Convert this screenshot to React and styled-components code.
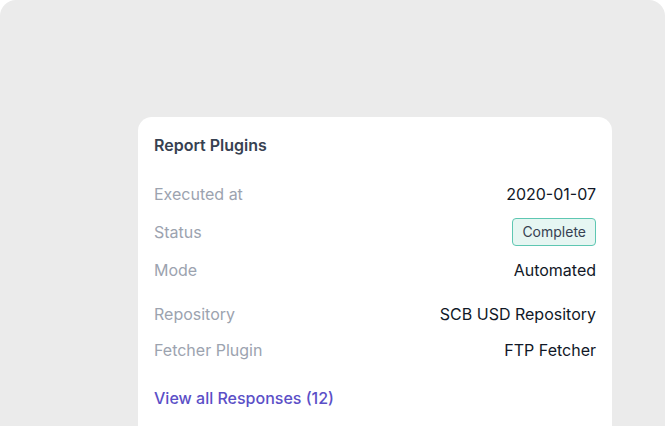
import React from 'react';
import styled, {createGlobalStyle} from 'styled-components';

const GlobalStyle = createGlobalStyle`
  html, body {
    margin: 0;
    padding: 0;
    background: #ffffff;
  }
  body {
    font-family: Inter, "Noto Sans", sans-serif;
  }
`;

const rows = [
  [
    {label: 'Executed at', value: '2020-01-07'},
    {label: 'Status', value: 'Complete', badge: true},
    {label: 'Mode', value: 'Automated'},
  ],
  [
    {label: 'Repository', value: 'SCB USD Repository'},
    {label: 'Fetcher Plugin', value: 'FTP Fetcher'},
  ],
];

function App() {
  return (
    <>
      <GlobalStyle />
      <ScPage>
        <ScCard>
          <ScTitle>Report Plugins</ScTitle>
          <ScSection $gap={10} $mt={25}>
            {rows[0].map(row => (
              <ScRow key={row.label}>
                <ScLabel>{row.label}</ScLabel>
                {row.badge ? <ScBadge>{row.value}</ScBadge> : <ScValue>{row.value}</ScValue>}
              </ScRow>
            ))}
          </ScSection>
          <ScSection $gap={8} $mt={16}>
            {rows[1].map(row => (
              <ScRow key={row.label}>
                <ScLabel>{row.label}</ScLabel>
                <ScValue>{row.value}</ScValue>
              </ScRow>
            ))}
          </ScSection>
          <ScLink href="#">View all Responses (12)</ScLink>
        </ScCard>
      </ScPage>
    </>
  );
}

const ScPage = styled.div`
  width: 665px;
  height: 426px;
  box-sizing: border-box;
  background: #ebebeb;
  border-radius: 16px 16px 0 0;
  padding: 117px 53px 0 138px;
  overflow: hidden;
`;

const ScCard = styled.div`
  background: #ffffff;
  border-radius: 14px 14px 0 0;
  padding: 18px 16px 40px 16px;
`;

const ScTitle = styled.div`
  font-size: 16px;
  line-height: 20px;
  font-weight: 600;
  color: #374151;
`;

const ScSection = styled.div`
  display: flex;
  flex-direction: column;
  gap: ${p => p.$gap}px;
  margin-top: ${p => p.$mt}px;
`;

const ScRow = styled.div`
  display: flex;
  justify-content: space-between;
  align-items: center;
  height: 28px;
  font-size: 16px;
  line-height: 20px;
`;

const ScLabel = styled.span`
  color: #9ca3af;
`;

const ScValue = styled.span`
  color: #111827;
`;

const ScBadge = styled.span`
  box-sizing: border-box;
  height: 28px;
  display: inline-flex;
  align-items: center;
  padding: 0 9px;
  font-size: 14px;
  color: #374151;
  background: #e6f6f2;
  border: 1px solid #5ec7b2;
  border-radius: 4px;
`;

const ScLink = styled.a`
  display: block;
  margin-top: 24px;
  font-size: 16px;
  line-height: 20px;
  font-weight: 500;
  color: #5b4fc7;
  text-decoration: none;
`;

export default App;
